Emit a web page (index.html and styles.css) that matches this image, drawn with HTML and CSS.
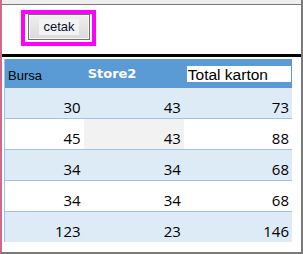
FILE: index.html
```html
<!DOCTYPE html>
<html>
<head>
<meta charset="utf-8">
<link rel="stylesheet" href="styles.css">
</head>
<body>
<div class="frame">
  <div class="topbar"></div>
  <div class="toolbar">
    <div class="highlight">
      <button class="btn"><span class="btn-label">cetak</span></button>
    </div>
  </div>
  <div class="rule"></div>
  <div class="sheet">
    <table class="grid">
      <colgroup>
        <col class="c1"><col class="c2"><col class="c3">
      </colgroup>
      <thead>
        <tr>
          <th class="h-bursa">Bursa</th>
          <th class="h-store">Store2</th>
          <th class="h-total"><span class="total-box">Total karton</span></th>
        </tr>
      </thead>
      <tbody>
        <tr class="band"><td>30</td><td>43</td><td>73</td></tr>
        <tr class="plain"><td>45</td><td class="sel">43</td><td>88</td></tr>
        <tr class="band"><td>34</td><td>34</td><td>68</td></tr>
        <tr class="plain"><td>34</td><td>34</td><td>68</td></tr>
        <tr class="band last"><td>123</td><td>23</td><td>146</td></tr>
      </tbody>
    </table>
  </div>
</div>
</body>
</html>
```
FILE: styles.css
```css
html, body {
  margin: 0;
  padding: 0;
  background: #ffffff;
}

.frame {
  box-sizing: border-box;
  width: 303px;
  height: 254px;
  border-left: 2px solid #d0688c;
  border-right: 2px solid #7a7a7a;
  border-bottom: 2px solid #7a7a7a;
  background: #ffffff;
  display: flex;
  flex-direction: column;
}

.topbar {
  height: 4px;
  background: #eeeeee;
  border-bottom: 1px solid #7a7a7a;
}

.toolbar {
  height: 49px;
  box-sizing: border-box;
  padding: 5px 0 0 19px;
  display: flex;
  align-items: flex-start;
}

.highlight {
  border: 4px solid #ff00ff;
  padding: 0 2px 2px 3px;
  background: #ffffff;
  display: flex;
}

.btn {
  width: 62px;
  height: 26px;
  box-sizing: border-box;
  border: 1px solid #707070;
  border-radius: 0;
  background: linear-gradient(#efefef, #dadada);
  box-shadow: inset 0 0 0 1px #f6f6f6;
  padding: 0;
  margin: 0;
  display: flex;
  align-items: center;
  justify-content: center;
  font-family: "Liberation Sans", Arial, sans-serif;
  font-size: 13px;
  color: #0a1030;
}

.btn-label {
  background: #f3f3f3;
  padding: 1px 4px;
  line-height: 14px;
}

.rule {
  height: 3px;
  background: #000000;
}

.sheet {
  padding: 2px 0 0 2px;
}

.grid {
  border-collapse: collapse;
  table-layout: fixed;
  width: 288px;
  border-left: 1px solid #9dc3e6;
}

.c1 { width: 79px; }
.c2 { width: 100px; }
.c3 { width: 108px; }

.grid thead tr {
  background: #5b9bd5;
  height: 26px;
}

.grid th {
  padding: 0;
  text-align: left;
  vertical-align: middle;
  font-weight: normal;
  height: 26px;
}

.h-bursa {
  font-family: "Liberation Sans", Arial, sans-serif;
  font-size: 13px;
  color: #000000;
  padding: 3px 0 0 3px !important;
}

.h-store {
  font-family: "DejaVu Sans", Verdana, sans-serif;
  font-weight: bold !important;
  font-size: 13px;
  color: #ffffff;
  padding: 0 0 0 4px !important;
}

.h-total {
  padding: 0 1px 0 3px !important;
}

.total-box {
  display: block;
  background: #ffffff;
  height: 16px;
  line-height: 17px;
  font-family: "Liberation Sans", Arial, sans-serif;
  font-size: 15.5px;
  color: #000000;
  padding-left: 1px;
  margin-top: 1px;
}

.grid td {
  font-family: "Open Sans", "Noto Sans", sans-serif;
  font-size: 15px;
  line-height: 20px;
  height: 30px;
  box-sizing: border-box;
  padding: 9px 3px 1px 0;
  text-align: right;
  vertical-align: top;
  color: #000000;
  border-bottom: 1px solid #9dc3e6;
}

.band { background: #ddebf7; }
.plain { background: #ffffff; }
.grid td.sel { background: #f2f2f2; }
.last td { border-bottom: none; }
```
